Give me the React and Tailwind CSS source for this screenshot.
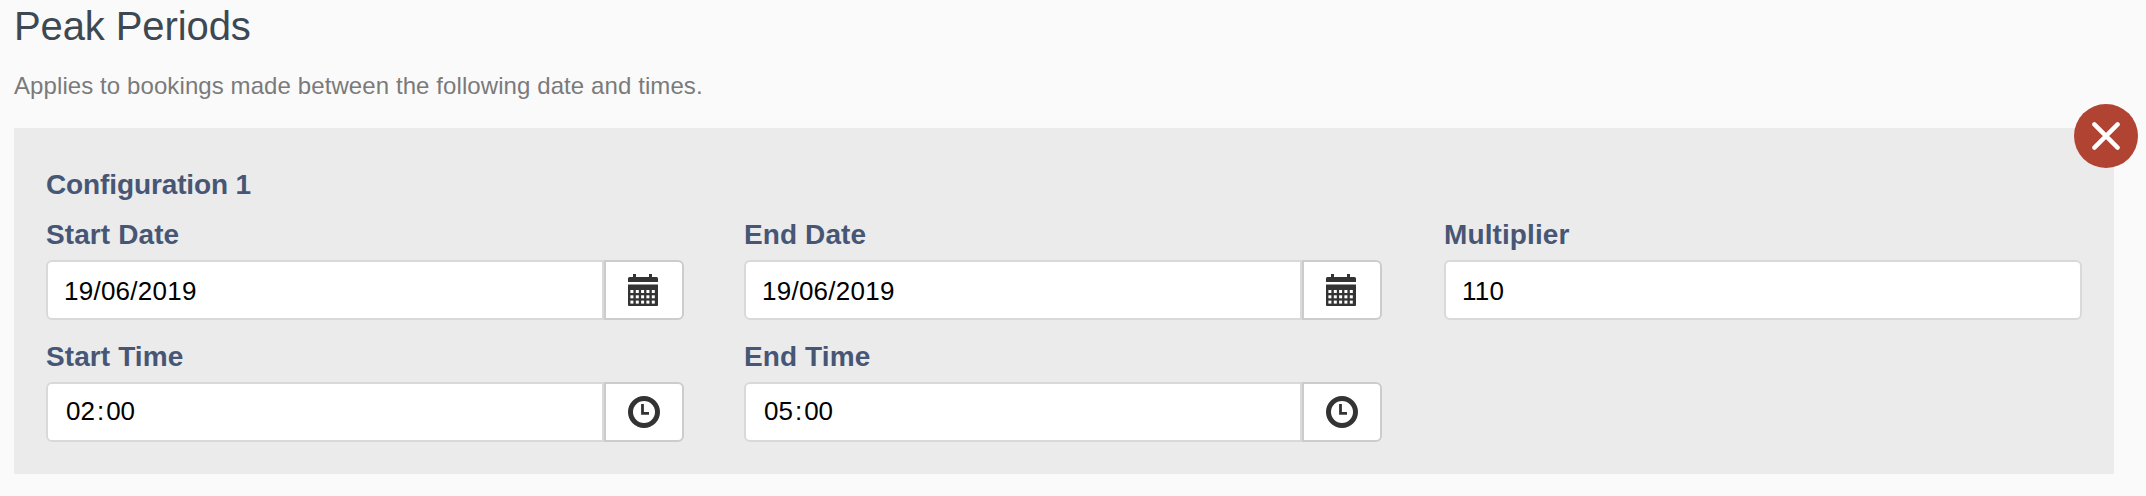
// src/App.jsx

const inputBase = "h-[60px] min-w-0 flex-1 border-2 border-[#d9d9d9] bg-white text-[26px] text-black";

export default function App() {
  return (
    <div className="h-[496px] w-[2146px] overflow-hidden bg-[#fafafa] pl-[14px] font-['Liberation_Sans',Arial,sans-serif]">
      <h1 className="h-[58px] pt-[3px] text-[40px] leading-[46px] tracking-[-0.1px] text-[#3d4852]">Peak Periods</h1>
      <p className="h-[70px] pt-[14px] text-2xl leading-[27px] tracking-[0.09px] text-[#7a7a7a]">
        Applies to bookings made between the following date and times.
      </p>

      <section className="relative h-[346px] w-[2100px] bg-[#ebebeb] px-8 pt-8">
        <CloseButton />
        <h2 className="h-[50px] pt-[9px] text-[28px] font-bold leading-[31px] tracking-[-0.12px] text-[#475675]">
          Configuration 1
        </h2>

        <div className="grid grid-cols-[698px_700px_638px]">
          <Field label="Start Date" icon={<CalendarIcon />}>
            <DateValue value="19/06/2019" />
          </Field>
          <Field label="End Date" icon={<CalendarIcon />}>
            <DateValue value="19/06/2019" />
          </Field>
          <Field label="Multiplier">
            <div className={`${inputBase} rounded-md pl-4 leading-[58px] tracking-[0.25px]`}>110</div>
          </Field>
          <Field label="Start Time" icon={<ClockIcon />}>
            <TimeValue hours="02" minutes="00" />
          </Field>
          <Field label="End Time" icon={<ClockIcon />}>
            <TimeValue hours="05" minutes="00" />
          </Field>
        </div>
      </section>
    </div>
  );
}

function Field({ label, icon, children }) {
  return (
    <div className="h-[122px] w-[638px]">
      <label className="block h-[50px] pt-[9px] text-[28px] font-bold leading-[31px] tracking-[0.1px] text-[#475675]">
        {label}
      </label>
      <div className="flex">
        {children}
        {icon && (
          <button className="flex h-[60px] w-20 items-center rounded-r-md border-2 border-[#cccccc] bg-white pl-[22px]">
            {icon}
          </button>
        )}
      </div>
    </div>
  );
}

function DateValue({ value }) {
  return <div className={`${inputBase} rounded-l-md pl-4 leading-[58px] tracking-[0.25px]`}>{value}</div>;
}

function TimeValue({ hours, minutes }) {
  return (
    <div className={`${inputBase} flex rounded-l-md pl-[18px] leading-[54px]`}>
      <span>{hours}</span>
      <span className="px-[2px]">:</span>
      <span>{minutes}</span>
    </div>
  );
}

function CloseButton() {
  return (
    <button
      className="absolute right-[-24px] top-[-24px] flex h-16 w-16 items-center justify-center rounded-full bg-[#b04332]"
      aria-label="Remove"
    >
      <svg width="28" height="28" viewBox="0 0 28 28" fill="none" stroke="#fff" strokeWidth="4.4" strokeLinecap="round">
        <path d="M2.4 2.4 25.6 25.6M25.6 2.4 2.4 25.6" />
      </svg>
    </button>
  );
}

function CalendarIcon() {
  return (
    <svg width="30" height="32" viewBox="0 0 30 32" fill="#333">
      <path d="M5 0h3v3h13V0h3v3h4.500a1.500 1.500 0 0 1 1.500 1.500V8H0V4.500A1.500 1.500 0 0 1 1.500 3H5z" />
      <path d="M0 10.500h30v20.500a1 1 0 0 1-1 1h-28A1 1 0 0 1 0 31z" />
      {[16, 21.3, 26.6].map(y =>
        [2.4, 7.8, 13.1, 18.4, 23.8].map(x => (
          <rect key={`${x}-${y}`} x={x} y={y} width="3" height="3" fill="#fff" />
        ))
      )}
    </svg>
  );
}

function ClockIcon() {
  return (
    <svg width="32" height="32" viewBox="0 0 32 32" fill="none" stroke="#333">
      <circle cx="16" cy="16" r="13.500" strokeWidth="5" />
      <path d="M14.500 8v9.300H21" strokeWidth="2.800" />
    </svg>
  );
}
